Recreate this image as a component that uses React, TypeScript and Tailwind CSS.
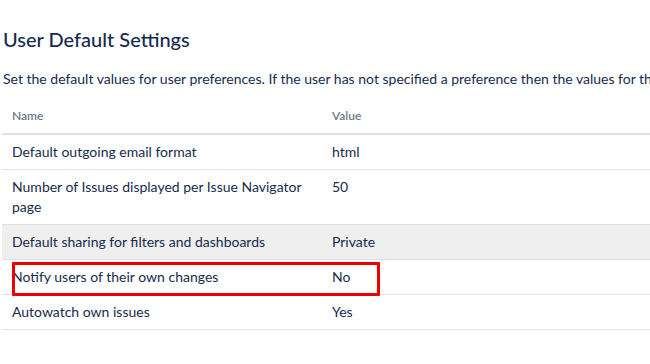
const rows = [
  { name: "Default outgoing email format", value: "html" },
  { name: "Number of Issues displayed per Issue Navigator page", value: "50" },
  { name: "Default sharing for filters and dashboards", value: "Private", hover: true },
  { name: "Notify users of their own changes", value: "No", marked: true },
  { name: "Autowatch own issues", value: "Yes" },
];

export default function App() {
  return (
    <div className="w-[650px] h-[364px] overflow-hidden bg-white text-[#172b4d] font-['Segoe_UI',Lato,'Liberation_Sans',sans-serif]">
      <h2 className="pl-[3px] pt-[27px] text-[20px] leading-[24px] font-medium">User Default Settings</h2>
      <p className="mt-[18px] pl-[3px] text-[14px] leading-[20px] whitespace-nowrap">
        Set the default values for user preferences. If the user has not specified a preference then the values for the
        user will be taken from this table.
      </p>
      <table className="ml-[2px] mt-[10px] w-[700px] border-collapse text-left">
        <thead>
          <tr className="border-b-2 border-[#dfe1e6]">
            <th className="w-[320px] px-[10px] py-[7px] text-[12px] leading-[20px] font-semibold text-[#6b778c]">Name</th>
            <th className="px-[10px] py-[7px] text-[12px] leading-[20px] font-semibold text-[#6b778c]">Value</th>
          </tr>
        </thead>
        <tbody>
          {rows.map((r) => (
            <tr key={r.name} className={`border-b border-[#dfe1e6] ${r.hover ? "bg-[#efefef]" : ""}`}>
              <td className="relative w-[320px] px-[10px] py-[7px] align-top text-[14px] leading-[20px]">
                {r.marked && (
                  <div className="absolute left-[10px] top-[2px] w-[368px] h-[34px] border-[3px] border-[#ee0000] rounded-[1px] pointer-events-none" />
                )}
                {r.name}
              </td>
              <td className="px-[10px] py-[7px] align-top text-[14px] leading-[20px]">{r.value}</td>
            </tr>
          ))}
        </tbody>
      </table>
    </div>
  );
}
